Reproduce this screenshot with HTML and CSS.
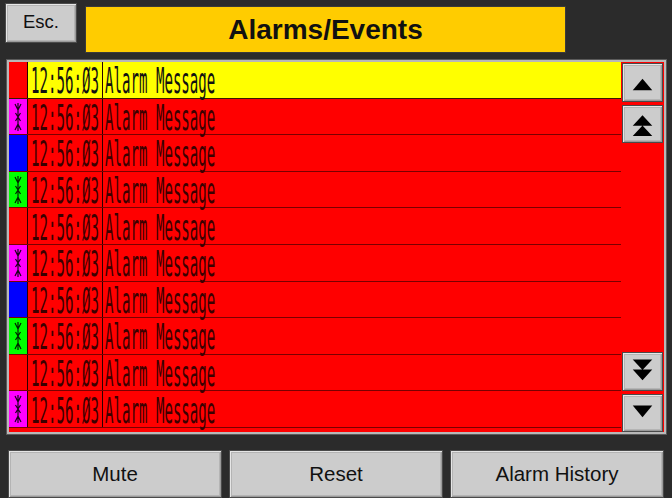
FILE: index.html
```html
<!DOCTYPE html>
<html>
<head>
<meta charset="utf-8">
<link rel="stylesheet" href="styles.css">
</head>
<body>
<div class="screen">
  <div class="topbar">
    <button class="btn esc">Esc.</button>
    <div class="title">Alarms/Events</div>
  </div>

  <div class="panel">
    <div class="list">
      <div class="row sel"><div class="mark c-red"></div><div class="time"><span class="lcd">12:56:Ø3</span></div><div class="msg"><span class="lcd">Alarm Message</span></div></div>
      <div class="row"><div class="mark c-mag"><svg class="ico" viewBox="0 0 18 36"><path d="M9 4V32M6 5L9 11L12 5M6 31L9 25L12 31M6.5 14L11.5 22M11.5 14L6.5 22"/></svg></div><div class="time"><span class="lcd">12:56:Ø3</span></div><div class="msg"><span class="lcd">Alarm Message</span></div></div>
      <div class="row"><div class="mark c-blue"></div><div class="time"><span class="lcd">12:56:Ø3</span></div><div class="msg"><span class="lcd">Alarm Message</span></div></div>
      <div class="row"><div class="mark c-green"><svg class="ico" viewBox="0 0 18 36"><path d="M9 4V32M6 5L9 11L12 5M6 31L9 25L12 31M6.5 14L11.5 22M11.5 14L6.5 22"/></svg></div><div class="time"><span class="lcd">12:56:Ø3</span></div><div class="msg"><span class="lcd">Alarm Message</span></div></div>
      <div class="row"><div class="mark c-red"></div><div class="time"><span class="lcd">12:56:Ø3</span></div><div class="msg"><span class="lcd">Alarm Message</span></div></div>
      <div class="row"><div class="mark c-mag"><svg class="ico" viewBox="0 0 18 36"><path d="M9 4V32M6 5L9 11L12 5M6 31L9 25L12 31M6.5 14L11.5 22M11.5 14L6.5 22"/></svg></div><div class="time"><span class="lcd">12:56:Ø3</span></div><div class="msg"><span class="lcd">Alarm Message</span></div></div>
      <div class="row"><div class="mark c-blue"></div><div class="time"><span class="lcd">12:56:Ø3</span></div><div class="msg"><span class="lcd">Alarm Message</span></div></div>
      <div class="row"><div class="mark c-green"><svg class="ico" viewBox="0 0 18 36"><path d="M9 4V32M6 5L9 11L12 5M6 31L9 25L12 31M6.5 14L11.5 22M11.5 14L6.5 22"/></svg></div><div class="time"><span class="lcd">12:56:Ø3</span></div><div class="msg"><span class="lcd">Alarm Message</span></div></div>
      <div class="row"><div class="mark c-red"></div><div class="time"><span class="lcd">12:56:Ø3</span></div><div class="msg"><span class="lcd">Alarm Message</span></div></div>
      <div class="row"><div class="mark c-mag"><svg class="ico" viewBox="0 0 18 36"><path d="M9 4V32M6 5L9 11L12 5M6 31L9 25L12 31M6.5 14L11.5 22M11.5 14L6.5 22"/></svg></div><div class="time"><span class="lcd">12:56:Ø3</span></div><div class="msg"><span class="lcd">Alarm Message</span></div></div>
    </div>
    <div class="scroll">
      <div class="pair">
        <button class="btn sbtn"><svg viewBox="0 0 42 38"><path d="M10.5 28L21 15.5L31.5 28Z"/></svg></button>
        <button class="btn sbtn"><svg viewBox="0 0 42 38"><path d="M10.5 21L21 9.5L31.5 21ZM10.5 32L21 20.5L31.5 32Z"/></svg></button>
      </div>
      <div class="pair">
        <button class="btn sbtn"><svg viewBox="0 0 42 38"><path d="M10.5 6.5L21 18L31.5 6.5ZM10.5 17.5L21 29L31.5 17.5Z"/></svg></button>
        <button class="btn sbtn"><svg viewBox="0 0 42 38"><path d="M10.5 11L21 23.5L31.5 11Z"/></svg></button>
      </div>
    </div>
  </div>

  <div class="bottombar">
    <button class="btn big">Mute</button>
    <button class="btn big">Reset</button>
    <button class="btn big">Alarm History</button>
  </div>
</div>
</body>
</html>
```

FILE: styles.css
```css
html, body {
  margin: 0;
  padding: 0;
  background: #2b2b2b;
  overflow: hidden;
}

.screen {
  width: 672px;
  height: 498px;
  display: flex;
  flex-direction: column;
  font-family: "Liberation Sans", Arial, sans-serif;
}

.btn {
  box-sizing: border-box;
  margin: 0;
  padding: 0;
  background: #cccccc;
  border: 1px solid #4a4a4a;
  box-shadow: inset 1px 1px 0 #e6e6e6, inset -1px -1px 0 #9a9a9a, inset 0 0 0 2px #b4b4b4;
  color: #111;
  font-family: "Liberation Sans", Arial, sans-serif;
  display: flex;
  align-items: center;
  justify-content: center;
}

.topbar {
  display: flex;
  align-items: flex-start;
  gap: 8px;
  padding: 3px 0 0 5px;
}

.esc {
  width: 72px;
  height: 40px;
  font-size: 18.5px;
  padding-bottom: 2px;
}

.title {
  box-sizing: border-box;
  margin-top: 3px;
  width: 481px;
  height: 47px;
  background: #ffcc00;
  border: 1px solid #3a3a3a;
  color: #111;
  font-weight: bold;
  font-size: 28px;
  display: flex;
  align-items: center;
  justify-content: center;
}

.panel {
  box-sizing: border-box;
  margin: 6px 0 0 6px;
  width: 661px;
  height: 378px;
  padding: 2px;
  border: 1px solid #5a5a5a;
  background: #ff0000;
  box-shadow: inset 0 0 0 2px #b8b8b8;
  display: flex;
}

.list {
  width: 612px;
  background: #ff0000;
  display: flex;
  flex-direction: column;
}

.row {
  box-sizing: border-box;
  height: 36.6px;
  display: flex;
  border-bottom: 1px solid #7a0000;
  background: #ff0000;
  color: #3a0000;
}

.row.sel {
  background: #ffff00;
  color: #111;
  border-bottom-color: #3a1a00;
}

.mark {
  width: 18px;
  flex: none;
  border-right: 1px solid #2a0000;
  display: flex;
  justify-content: center;
}
.c-red { background: #ff0000; }
.c-mag { background: #ff00ff; }
.c-blue { background: #0000ff; }
.c-green { background: #00ff00; }

.ico {
  width: 18px;
  height: 36px;
  fill: none;
  stroke: #1a001a;
  stroke-width: 1.2;
}
.c-green .ico { stroke: #002000; }

.time {
  width: 75px;
  flex: none;
  border-right: 1px solid #2a0000;
  padding-left: 3px;
  box-sizing: border-box;
  display: flex;
  align-items: center;
}

.msg {
  flex: 1;
  padding-left: 2px;
  display: flex;
  align-items: center;
}

.lcd {
  display: inline-block;
  font-family: "DejaVu Sans Mono", monospace;
  font-size: 14.1px;
  line-height: 14px;
  white-space: nowrap;
  transform: scaleY(2.5);
  transform-origin: 50% 50%;
  margin-top: 1px;
}

.scroll {
  width: 43px;
  display: flex;
  flex-direction: column;
  justify-content: space-between;
  padding: 1px 0 0 1px;
  box-sizing: border-box;
}

.pair {
  display: flex;
  flex-direction: column;
  gap: 3px;
}

.sbtn {
  width: 41px;
  height: 38.5px;
}
.sbtn svg {
  width: 42px;
  height: 38px;
  fill: #000;
}

.bottombar {
  display: flex;
  gap: 7px;
  padding: 15px 0 0 8px;
}

.big {
  width: 214px;
  height: 48px;
  font-size: 20.5px;
}
```
